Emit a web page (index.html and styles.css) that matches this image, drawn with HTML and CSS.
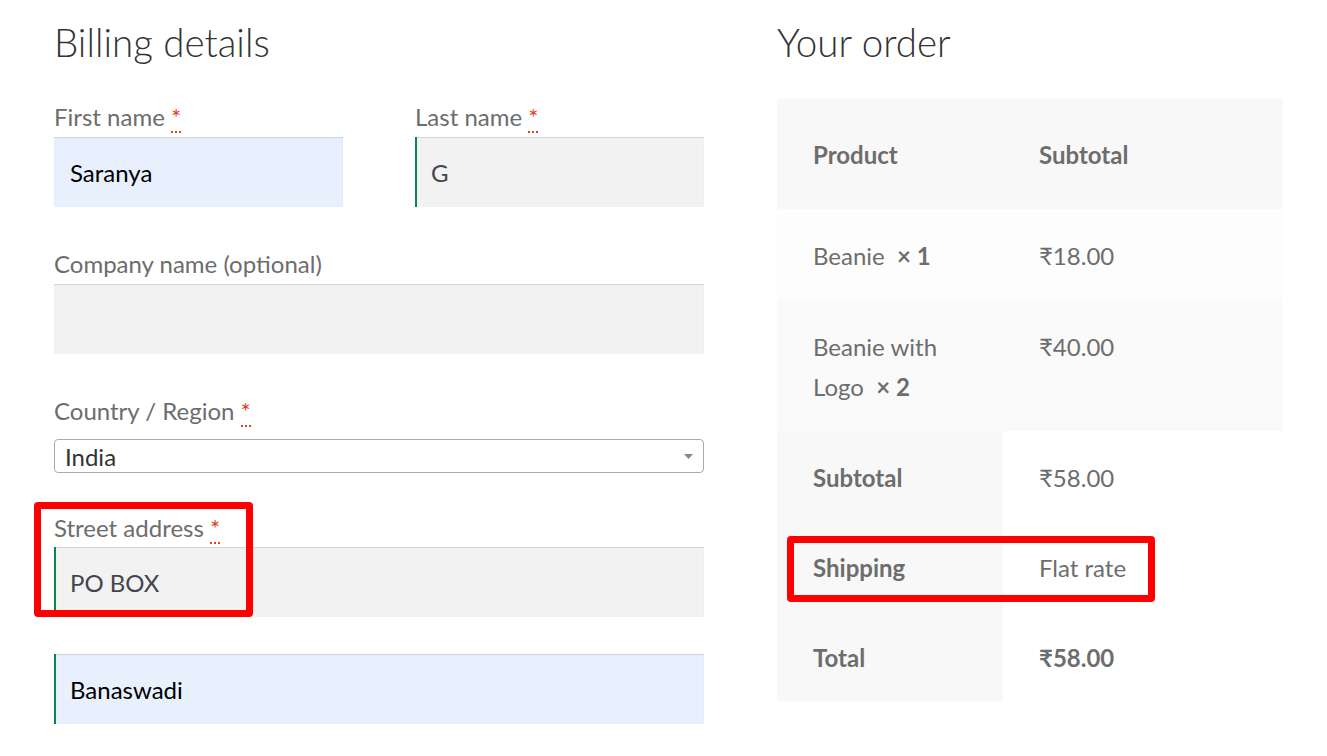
FILE: index.html
```html
<!DOCTYPE html>
<html lang="en">
<head>
<meta charset="utf-8">
<title>Checkout</title>
<link rel="stylesheet" href="styles.css">
</head>
<body>
<div class="page">
  <section class="billing">
    <h3 class="heading">Billing details</h3>
    <div class="row two">
      <div class="field">
        <label class="label">First name <abbr class="req" title="required">*</abbr></label>
        <div class="input autofill">Saranya</div>
      </div>
      <div class="field">
        <label class="label">Last name <abbr class="req" title="required">*</abbr></label>
        <div class="input valid">G</div>
      </div>
    </div>
    <div class="field company">
      <label class="label">Company name (optional)</label>
      <div class="input"></div>
    </div>
    <div class="field country">
      <label class="label">Country / Region <abbr class="req" title="required">*</abbr></label>
      <div class="select">
        <span>India</span>
        <svg class="arrow" width="9" height="5" viewBox="0 0 9 5"><path d="M0 0h9L4.5 5z" fill="#888"/></svg>
      </div>
    </div>
    <div class="field street">
      <label class="label">Street address <abbr class="req" title="required">*</abbr></label>
      <div class="input valid">PO BOX</div>
      <div class="mark mark-street"></div>
    </div>
    <div class="field street2">
      <div class="input valid autofill">Banaswadi</div>
    </div>
  </section>
  <section class="order">
    <h3 class="heading">Your order</h3>
    <div class="table-wrap">
      <table class="order-table">
        <thead>
          <tr><th class="c1">Product</th><th class="c2">Subtotal</th></tr>
        </thead>
        <tbody>
          <tr class="odd"><td>Beanie&nbsp; <strong>×&nbsp;1</strong></td><td>₹18.00</td></tr>
          <tr class="even"><td>Beanie with Logo&nbsp; <strong>×&nbsp;2</strong></td><td>₹40.00</td></tr>
        </tbody>
        <tfoot>
          <tr><th>Subtotal</th><td>₹58.00</td></tr>
          <tr><th>Shipping</th><td>Flat rate</td></tr>
          <tr><th>Total</th><td><strong>₹58.00</strong></td></tr>
        </tfoot>
      </table>
      <div class="mark mark-ship"></div>
    </div>
  </section>
</div>
</body>
</html>
```

FILE: styles.css
```css
html, body {
  margin: 0;
  padding: 0;
  background: #ffffff;
}
body {
  font-family: "Lato", "Liberation Sans", sans-serif;
  color: #6d6d6d;
}
.page {
  display: grid;
  grid-template-columns: 650px 506px;
  column-gap: 73px;
  padding-left: 54px;
}
.heading {
  margin: 0;
  padding-top: 19px;
  height: 84px;
  box-sizing: border-box;
  font-size: 38.5px;
  line-height: 46px;
  font-weight: 300;
  color: #333333;
}
.row.two {
  display: grid;
  grid-template-columns: 289px 289px;
  column-gap: 72px;
}
.field {
  position: relative;
}
.label {
  display: block;
  font-size: 24px;
  line-height: 26px;
  margin-top: 20px;
  margin-bottom: 7px;
  color: #6d6d6d;
}
.req {
  color: #e2401c;
  text-decoration: none;
  border-bottom: 2px dotted #e2401c;
  line-height: 1;
}
.input {
  height: 70px;
  box-sizing: border-box;
  background: #f2f2f2;
  box-shadow: inset 0 1px 1px rgba(0, 0, 0, 0.125);
  padding: 0 16px;
  display: flex;
  align-items: center;
  font-size: 24px;
  color: #43454b;
}
.input.autofill {
  background: #e8f0fe;
  color: #000000;
}
.input.valid {
  border-left: 2px solid #0f834d;
  padding-left: 14px;
}
.company .label {
  margin-top: 44px;
}
.country .label {
  margin-top: 44px;
  margin-bottom: 15px;
}
.select {
  height: 34px;
  box-sizing: border-box;
  border: 1px solid #aaaaaa;
  border-radius: 4px;
  display: flex;
  align-items: center;
  justify-content: space-between;
  padding: 0 10px 0 10px;
  font-size: 24px;
  color: #333333;
}
.street .label {
  margin-top: 42px;
  margin-bottom: 6px;
}
.street2 {
  margin-top: 37px;
}
.mark {
  position: absolute;
  border: 7px solid #ff0000;
  border-radius: 4px;
  box-sizing: border-box;
  pointer-events: none;
}
.mark-street {
  left: -20px;
  top: -13px;
  width: 219px;
  height: 115px;
}
.table-wrap {
  position: relative;
  margin-top: 15px;
}
.order-table {
  width: 506px;
  border-collapse: collapse;
  font-size: 24px;
  line-height: 40px;
  color: #6d6d6d;
}
.order-table th,
.order-table td {
  text-align: left;
  vertical-align: top;
  padding: 25px 36px;
}
.order-table th {
  font-weight: 700;
}
.order-table thead th {
  background: #f8f8f8;
  padding-top: 36px;
  padding-bottom: 34px;
}
.order-table .c1 {
  width: 154px;
}
.order-table tbody tr.odd td {
  background: #fdfdfd;
  padding-top: 27px;
  padding-bottom: 23px;
}
.order-table tbody tr.even td {
  background: #fafafa;
  padding-top: 28px;
  padding-bottom: 24px;
}
.order-table tfoot th,
.order-table tfoot td {
  padding-top: 27px;
  padding-bottom: 23px;
}
.order-table tfoot th {
  background: #f8f8f8;
}
.order-table tfoot td {
  background: #ffffff;
}
.mark-ship {
  left: 10px;
  top: 437px;
  width: 368px;
  height: 66px;
}
```
